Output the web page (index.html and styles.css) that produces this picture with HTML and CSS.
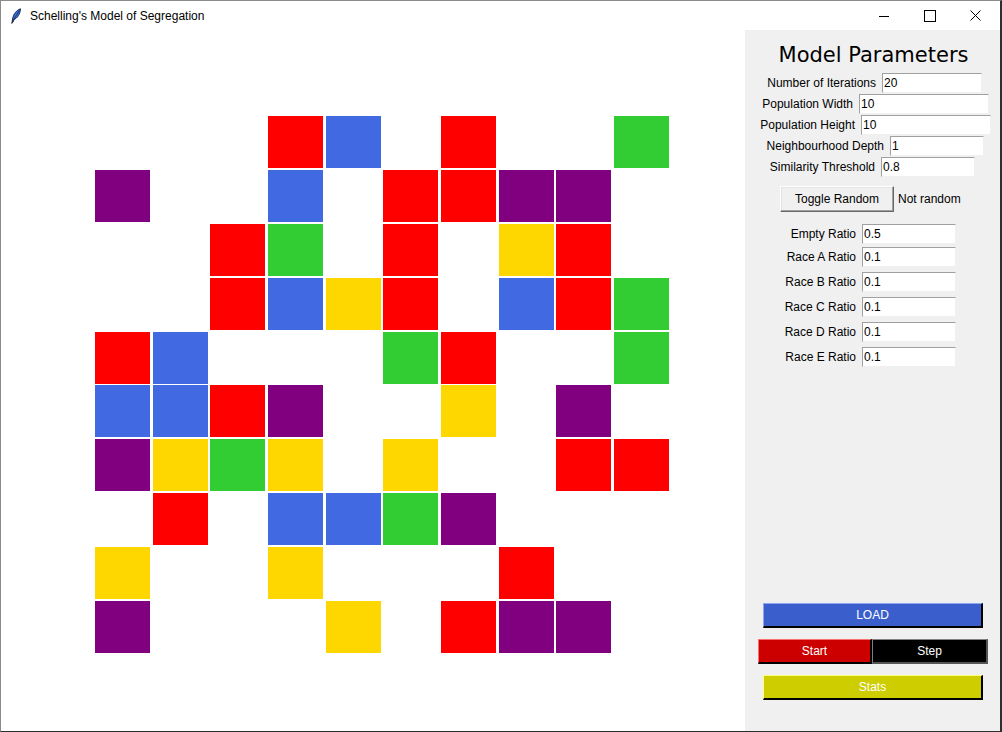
FILE: index.html
```html
<!DOCTYPE html>
<html>
<head>
<meta charset="utf-8">
<title>Schelling's Model of Segregation</title>
<link rel="stylesheet" href="styles.css">
</head>
<body>
<div class="window">
  <div class="titlebar">
    <svg class="feather" width="12" height="16" viewBox="0 0 12 16">
      <path d="M10.5 0.8 C7 2 3.5 5.5 2.6 10.8 L2.2 13.6 L3.3 13.8 L3.8 11.6 C7.5 10.2 10.2 6 10.5 0.8 Z" fill="#3a6fd8" stroke="#0d1f4a" stroke-width="0.9"/>
      <path d="M9.5 2.5 L3.4 12" stroke="#0d1f4a" stroke-width="0.7"/>
      <path d="M2.6 13.5 L1.6 15.6" stroke="#111" stroke-width="1.2"/>
    </svg>
    <span class="title">Schelling's Model of Segregation</span>
    <div class="controls">
      <span class="ctl min"></span>
      <span class="ctl max"></span>
      <span class="ctl close">
        <svg width="11" height="11" viewBox="0 0 11 11"><path d="M0.5 0.5 L10.5 10.5 M10.5 0.5 L0.5 10.5" stroke="#000" stroke-width="1"/></svg>
      </span>
    </div>
  </div>
  <div class="main">
    <div class="canvas">
      <div class="grid">
        <div></div><div></div><div></div><div class="r"></div><div class="b"></div><div></div><div class="r"></div><div></div><div></div><div class="g"></div>
        <div class="p"></div><div></div><div></div><div class="b"></div><div></div><div class="r"></div><div class="r"></div><div class="p"></div><div class="p"></div><div></div>
        <div></div><div></div><div class="r"></div><div class="g"></div><div></div><div class="r"></div><div></div><div class="y"></div><div class="r"></div><div></div>
        <div></div><div></div><div class="r"></div><div class="b"></div><div class="y"></div><div class="r"></div><div></div><div class="b"></div><div class="r"></div><div class="g"></div>
        <div class="r"></div><div class="b"></div><div></div><div></div><div></div><div class="g"></div><div class="r"></div><div></div><div></div><div class="g"></div>
        <div class="b"></div><div class="b"></div><div class="r"></div><div class="p"></div><div></div><div></div><div class="y"></div><div></div><div class="p"></div><div></div>
        <div class="p"></div><div class="y"></div><div class="g"></div><div class="y"></div><div></div><div class="y"></div><div></div><div></div><div class="r"></div><div class="r"></div>
        <div></div><div class="r"></div><div></div><div class="b"></div><div class="b"></div><div class="g"></div><div class="p"></div><div></div><div></div><div></div>
        <div class="y"></div><div></div><div></div><div class="y"></div><div></div><div></div><div></div><div class="r"></div><div></div><div></div>
        <div class="p"></div><div></div><div></div><div></div><div class="y"></div><div></div><div class="r"></div><div class="p"></div><div class="p"></div><div></div>
      </div>
    </div>
    <div class="panel">
      <div class="heading">Model Parameters</div>
      <div class="prow pr1"><label>Number of Iterations</label><div class="entry">20</div></div>
      <div class="prow pr2"><label>Population Width</label><div class="entry">10</div></div>
      <div class="prow pr3"><label>Population Height</label><div class="entry">10</div></div>
      <div class="prow pr4"><label>Neighbourhood Depth</label><div class="entry">1</div></div>
      <div class="prow pr5"><label>Similarity Threshold</label><div class="entry">0.8</div></div>
      <div class="toggle-row">
        <div class="tbtn">Toggle Random</div>
        <span class="status">Not random</span>
      </div>
      <div class="ratios">
        <div class="rrow first"><label>Empty Ratio</label><div class="entry">0.5</div></div>
        <div class="rrow"><label>Race A Ratio</label><div class="entry">0.1</div></div>
        <div class="rrow"><label>Race B Ratio</label><div class="entry">0.1</div></div>
        <div class="rrow"><label>Race C Ratio</label><div class="entry">0.1</div></div>
        <div class="rrow"><label>Race D Ratio</label><div class="entry">0.1</div></div>
        <div class="rrow"><label>Race E Ratio</label><div class="entry">0.1</div></div>
      </div>
      <div class="actions">
        <div class="cbtn load">LOAD</div>
        <div class="pair">
          <div class="cbtn start">Start</div>
          <div class="cbtn step">Step</div>
        </div>
        <div class="cbtn stats">Stats</div>
      </div>
    </div>
  </div>
</div>
</body>
</html>
```

FILE: styles.css
```css
* { box-sizing: border-box; }
html, body { margin: 0; padding: 0; background: #fff; }
body { font-family: "Liberation Sans", Arial, sans-serif; font-size: 12px; color: #000; }

.window {
  width: 1002px;
  height: 732px;
  border-top: 1px solid #8a8a8a;
  border-left: 1px solid #8a8a8a;
  border-right: 2px solid #2e2e2e;
  border-bottom: 1px solid #2e2e2e;
  display: flex;
  flex-direction: column;
  background: #fff;
}

.titlebar {
  height: 29px;
  flex: none;
  display: flex;
  align-items: center;
  background: #fff;
  position: relative;
}
.feather { margin-left: 9px; margin-top: 1px; flex: none; }
.title { margin-left: 8px; font-size: 12px; color: #000; }
.controls { margin-left: auto; display: flex; height: 29px; align-items: center; }
.ctl { display: flex; align-items: center; justify-content: center; width: 46px; height: 29px; }
.ctl.min::before { content: ""; display: block; width: 10px; height: 1px; background: #000; margin-top: 1px; }
.ctl.max::before { content: ""; display: block; width: 10px; height: 10px; border: 1px solid #000; }
.ctl.close { width: 44px; margin-right: 3px; }

.main { flex: 1; display: flex; min-height: 0; }

.canvas {
  width: 744px;
  flex: none;
  background: #fff;
  padding-top: 86px;
  padding-left: 94px;
}
.grid {
  display: grid;
  grid-template-columns: repeat(10, 55px);
  grid-template-rows: repeat(10, 52px);
  column-gap: 2.67px;
  row-gap: 1.9px;
}
.grid .r { background: #ff0000; }
.grid .b { background: #4169e1; }
.grid .g { background: #32cd32; }
.grid .y { background: #ffd700; }
.grid .p { background: #800080; }

.panel {
  width: 255px;
  flex: none;
  background: #f0f0f0;
  display: flex;
  flex-direction: column;
}
.heading {
  font-family: "DejaVu Sans", Verdana, sans-serif;
  font-size: 21px;
  line-height: 36px;
  height: 36px;
  margin-top: 7px;
  text-align: center;
  padding-left: 2px;
}

.prow { display: grid; height: 21px; align-items: start; }
.prow label, .rrow label { text-align: right; padding-right: 6px; line-height: 20px; white-space: nowrap; }
.pr1 { grid-template-columns: 137px 100px; }
.pr2 { grid-template-columns: 114px 130px; }
.pr3 { grid-template-columns: 116px 130px; }
.pr4 { grid-template-columns: 145px 94px; }
.pr5 { grid-template-columns: 136px 94px; }

.entry {
  height: 20px;
  background: #fff;
  border-top: 1px solid #a0a0a0;
  border-left: 1px solid #a0a0a0;
  border-right: 1px solid #f0f0f0;
  border-bottom: 1px solid #f0f0f0;
  padding-left: 1px;
  line-height: 18px;
}

.toggle-row { display: flex; align-items: center; margin-top: 8px; padding-left: 35px; height: 26px; }
.tbtn {
  width: 114px;
  height: 26px;
  background: #f0f0f0;
  border-top: 1px solid #fff;
  border-left: 1px solid #fff;
  border-right: 1px solid #696969;
  border-bottom: 1px solid #696969;
  box-shadow: inset -1px -1px 0 #a0a0a0, inset 1px 1px 0 #e3e3e3;
  display: flex; align-items: center; justify-content: center;
}
.status { margin-left: 4px; }

.ratios { margin-top: 12px; }
.rrow { display: grid; grid-template-columns: 117px 94px; height: 25px; align-items: start; }
.rrow.first { height: 23px; }

.actions { margin-top: auto; padding-bottom: 31px; display: flex; flex-direction: column; }
.cbtn {
  height: 25px;
  color: #fff;
  display: flex; align-items: center; justify-content: center;
  border-style: solid;
  border-width: 1px 2px 2px 1px;
}
.load { width: 220px; margin-left: 18px; background: #3a5fcd; border-color: #8ea6f0 #000 #000 #8ea6f0; }
.pair { display: flex; margin-left: 13px; margin-top: 11px; }
.start { width: 114px; background: #cd0000; border-color: #ff7070 #000 #000 #ff7070; }
.step { width: 116px; background: #000; border-color: #808080 #555 #555 #808080; }
.stats { width: 220px; margin-left: 18px; margin-top: 11px; background: #cdcd00; border-color: #ffff80 #000 #000 #ffff80; }
```
